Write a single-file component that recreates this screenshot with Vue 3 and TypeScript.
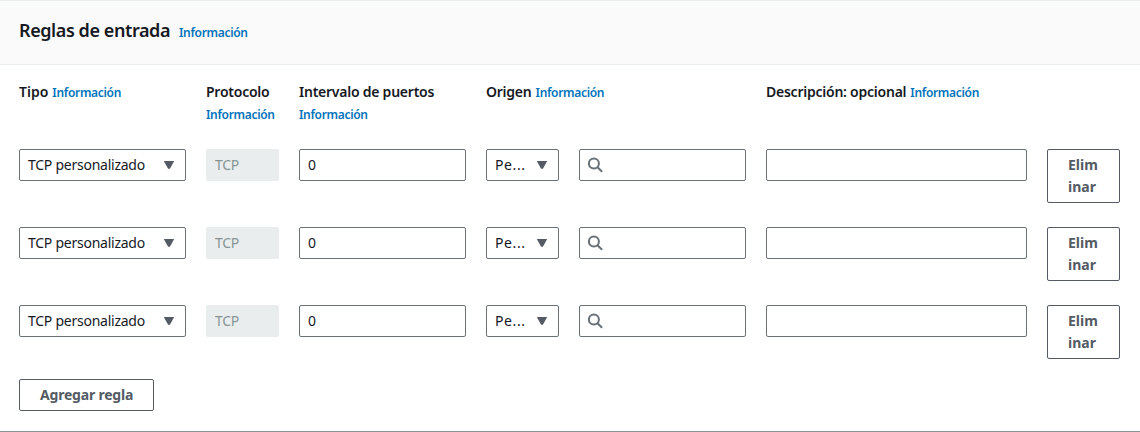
<script setup lang="ts">
import { ref } from 'vue'

interface Rule {
  id: number
  type: string
  protocol: string
  port: string
  source: string
}

const rules = ref<Rule[]>(
  [1, 2, 3].map((id) => ({
    id,
    type: 'TCP personalizado',
    protocol: 'TCP',
    port: '0',
    source: 'Pe...',
  })),
)
</script>

<template>
  <section class="panel">
    <header class="panel-header">
      <h2 class="title">Reglas de entrada</h2>
      <a class="info">Información</a>
    </header>

    <div class="body">
      <div class="grid labels">
        <div class="label-row"><span class="label short">Tipo</span><a class="info">Información</a></div>
        <div class="stacked"><span class="label">Protocolo</span><a class="info">Información</a></div>
        <div class="stacked"><span class="label">Intervalo de puertos</span><a class="info">Información</a></div>
        <div class="label-row span-two"><span class="label">Origen</span><a class="info">Información</a></div>
        <div class="label-row"><span class="label">Descripción: opcional</span><a class="info">Información</a></div>
      </div>

      <div v-for="rule in rules" :key="rule.id" class="grid rule">
        <div class="field">
          <span class="value">{{ rule.type }}</span>
          <svg class="caret" width="12" height="10" viewBox="0 0 12 10"><path d="M.8 1h10.4L6.9 8.8H5.1z" /></svg>
        </div>
        <div class="field disabled"><span class="value">{{ rule.protocol }}</span></div>
        <div class="field"><span class="value">{{ rule.port }}</span></div>
        <div class="field">
          <span class="value clipped">{{ rule.source }}</span>
          <svg class="caret" width="12" height="10" viewBox="0 0 12 10"><path d="M.8 1h10.4L6.9 8.8H5.1z" /></svg>
        </div>
        <div class="field">
          <svg class="search" width="16" height="16" viewBox="0 0 16 16">
            <circle cx="5.9" cy="6.6" r="5" />
            <path d="M9.5 10.2l4.6 4.6" />
          </svg>
        </div>
        <div class="field"></div>
        <button class="button remove">Elim<br />inar</button>
      </div>

      <button class="button add">Agregar regla</button>
    </div>
  </section>
</template>

<style>
body {
  margin: 0;
  background: #fff;
}
</style>

<style scoped>
.panel {
  box-sizing: border-box;
  height: 432px;
  border-top: 1px solid #eaeded;
  border-bottom: 1px solid #879596;
  font-family: "Noto Sans", "Open Sans", sans-serif;
  font-size: 14px;
  line-height: 22px;
  color: #16191f;
}
.panel-header {
  box-sizing: border-box;
  height: 64px;
  padding: 18px 19px 0;
  display: flex;
  align-items: baseline;
  gap: 9px;
  background: #fafafa;
  border-bottom: 1px solid #eaeded;
}
.title {
  margin: 0;
  font-size: 18px;
  line-height: 22px;
  font-weight: 600;
  letter-spacing: -0.42px;
  white-space: nowrap;
}
.info {
  font-size: 12px;
  font-weight: 600;
  letter-spacing: -0.32px;
  color: #0073bb;
  white-space: nowrap;
}
.body {
  padding: 16px 20px 0 19px;
}
.grid {
  display: grid;
  grid-template-columns: 167px 73px 167px 73px 167px 261px 73px;
  column-gap: 20px;
}
.labels {
  height: 68px;
  white-space: nowrap;
}
.label-row {
  display: flex;
  align-items: baseline;
  align-self: start;
  gap: 4px;
}
.stacked {
  display: flex;
  flex-direction: column;
}
.stacked .info {
  margin-top: 1px;
}
.span-two {
  grid-column: span 2;
}
.label {
  font-weight: 600;
  letter-spacing: -0.24px;
}
.short {
  letter-spacing: 0;
}
.rule {
  height: 78px;
  align-items: start;
}
.field {
  box-sizing: border-box;
  height: 32px;
  padding: 0 10px 0 8px;
  display: flex;
  align-items: center;
  justify-content: space-between;
  border: 1px solid #687078;
  border-radius: 2px;
  background: #fff;
  white-space: nowrap;
}
.value {
  letter-spacing: -0.25px;
}
.clipped {
  letter-spacing: 0.6px;
}
.disabled {
  border-color: #eaeded;
  background: #eaeded;
  color: #879596;
}
.caret {
  fill: #545b64;
}
.search {
  fill: none;
  stroke: #687078;
  stroke-width: 2;
}
.button {
  box-sizing: border-box;
  margin: 0;
  padding: 4px 20px;
  border: 1px solid #545b64;
  border-radius: 2px;
  background: #fff;
  color: #545b64;
  font: 700 14px/22px "Noto Sans", "Open Sans", sans-serif;
  text-align: left;
  white-space: nowrap;
}
.remove {
  width: 73px;
  height: 54px;
}
.add {
  display: block;
  width: 135px;
  height: 32px;
  margin-top: -4px;
  letter-spacing: -0.2px;
}
</style>
